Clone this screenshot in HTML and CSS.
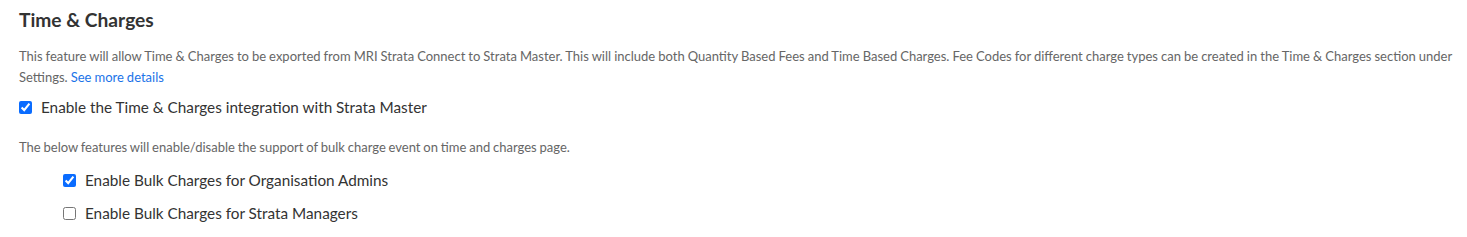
FILE: index.html
```html
<!DOCTYPE html>
<html lang="en">
<head>
  <meta charset="UTF-8">
  <title>Time &amp; Charges</title>
  <link rel="stylesheet" href="styles.css">
</head>
<body>
  <section class="settings-section">
    <h2>Time &amp; Charges</h2>
    <p class="desc">This feature will allow Time &amp; Charges to be exported from MRI Strata Connect to Strata Master. This will include both Quantity Based Fees and Time Based Charges. Fee Codes for different charge types can be created in the Time &amp; Charges section under Settings. <a href="#">See more details</a></p>

    <label class="check-row">
      <input type="checkbox" checked>
      <span>Enable the Time &amp; Charges integration with Strata Master</span>
    </label>

    <p class="note">The below features will enable/disable the support of bulk charge event on time and charges page.</p>

    <div class="sub-options">
      <label class="check-row">
        <input type="checkbox" checked>
        <span>Enable Bulk Charges for Organisation Admins</span>
      </label>
      <label class="check-row">
        <input type="checkbox">
        <span>Enable Bulk Charges for Strata Managers</span>
      </label>
    </div>
  </section>
</body>
</html>
```

FILE: styles.css
```css
body {
  font-family: Lato, "Open Sans", sans-serif;
  background: #fff;
  color: #333;
  margin: 0;
  padding: 0;
}

.settings-section {
  padding: 8px 8px 0 19px;
}

h2 {
  font-size: 19.2px;
  font-weight: bold;
  color: #333;
  margin: 0 0 14px 0;
  line-height: 24px;
}

.desc {
  font-size: 13px;
  line-height: 21px;
  word-spacing: -0.3px;
  color: #666;
  margin: 0 0 10px 0;
}

.desc a {
  color: #1a73e8;
  text-decoration: none;
}

.check-row {
  display: flex;
  align-items: center;
  gap: 9px;
  font-size: 15.3px;
  color: #333;
  height: 18px;
}

.check-row input {
  margin: 0;
  width: 13px;
  height: 13px;
  accent-color: #0a6cff;
}

.note {
  font-size: 13px;
  word-spacing: -0.5px;
  color: #666;
  margin: 23px 0 16px 0;
  line-height: 16px;
}

.sub-options {
  display: flex;
  flex-direction: column;
  gap: 15px;
  padding-left: 44px;
}
```
